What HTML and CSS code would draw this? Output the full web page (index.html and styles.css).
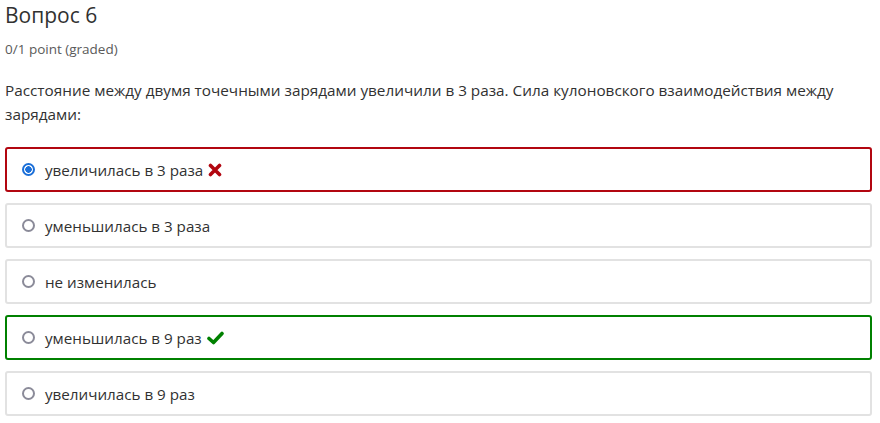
FILE: index.html
```html
<!DOCTYPE html>
<html lang="ru">
<head>
    <meta charset="UTF-8">
    <title>Вопрос 6</title>
    <link rel="stylesheet" href="styles.css">
</head>
<body>

    <h3 class="problem-header">Вопрос 6</h3>
    <div class="problem-progress">0/1 point (graded)</div>

    <p class="problem-text">Расстояние между двумя точечными зарядами увеличили в 3 раза. Сила кулоновского взаимодействия между зарядами:</p>

    <div class="choices">
        <label class="choice choice-incorrect">
            <input type="radio" name="q6" checked>
            <span>увеличилась в 3 раза</span>
            <svg class="mark" width="14" height="14" viewBox="0 0 14 14">
                <path d="M2.5 2.5 L11.5 11.5 M11.5 2.5 L2.5 11.5" stroke="#b20610" stroke-width="3.6" stroke-linecap="round"/>
            </svg>
        </label>
        <label class="choice">
            <input type="radio" name="q6">
            <span>уменьшилась в 3 раза</span>
        </label>
        <label class="choice">
            <input type="radio" name="q6">
            <span>не изменилась</span>
        </label>
        <label class="choice choice-correct">
            <input type="radio" name="q6">
            <span>уменьшилась в 9 раз</span>
            <svg class="mark" width="17" height="14" viewBox="0 0 17 14">
                <path d="M2 7.5 L6.5 11.5 L15 2.5" fill="none" stroke="#008100" stroke-width="3.6" stroke-linecap="round" stroke-linejoin="round"/>
            </svg>
        </label>
        <label class="choice">
            <input type="radio" name="q6">
            <span>увеличилась в 9 раз</span>
        </label>
    </div>

</body>
</html>
```

FILE: styles.css
```css
body {
    margin: 0;
    padding: 0 8px 0 5px;
    font-family: "Open Sans", "DejaVu Sans", sans-serif;
    color: #313131;
    background: #fff;
}
.problem-header {
    margin: 0;
    padding-top: 1px;
    font-size: 21px;
    font-weight: 400;
    line-height: 28px;
    color: #313131;
}
.problem-progress {
    margin-top: 11px;
    font-size: 13.5px;
    line-height: 18px;
    color: #5a5a5a;
}
.problem-text {
    margin: 20px 0 21px;
    font-size: 15.3px;
    line-height: 24px;
}
.choices {
    display: flex;
    flex-direction: column;
    gap: 11px;
}
.choice {
    display: flex;
    align-items: center;
    height: 41px;
    padding: 0 15px;
    border: 2px solid #e2e2e2;
    border-radius: 3px;
    font-size: 15.2px;
}
.choice input {
    appearance: none;
    box-sizing: border-box;
    margin: 0 10px 0 0;
    width: 13px;
    height: 13px;
    border: 2px solid #8b8b99;
    border-radius: 50%;
    background: #fff;
}
.choice input:checked {
    border-color: #1b6fd8;
    background: radial-gradient(circle, #1b6fd8 0 3px, #fff 3.5px);
}
.choice-incorrect {
    border-color: #b20610;
}
.choice-correct {
    border-color: #008100;
}
.mark {
    margin-left: 5px;
}
```
